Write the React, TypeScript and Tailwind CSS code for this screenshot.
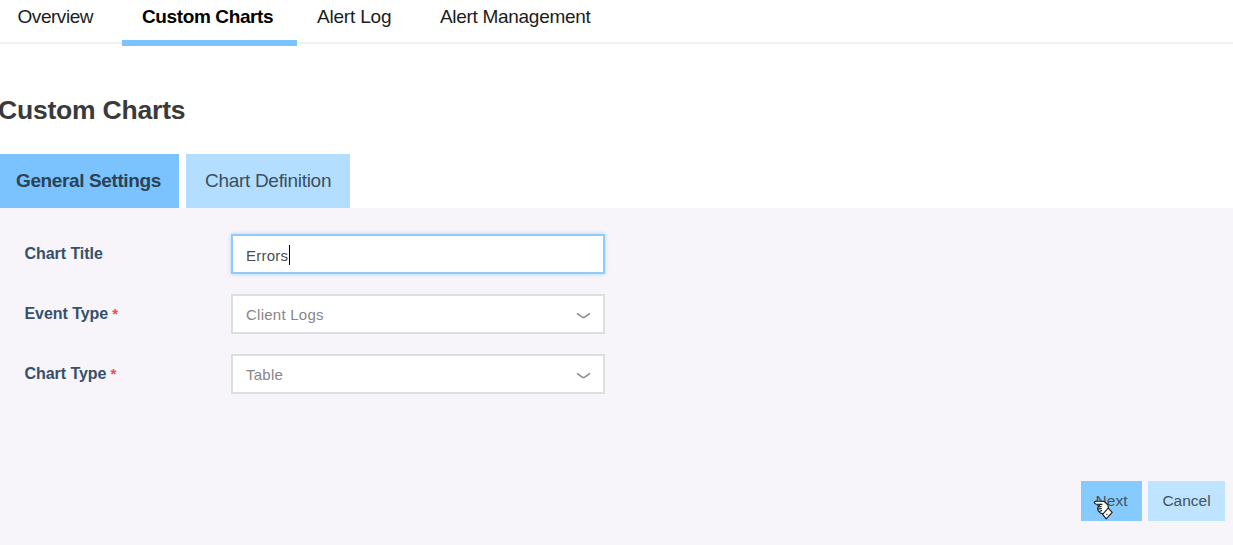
import type { ReactNode } from "react";

function Chevron() {
  return (
    <svg width="15" height="8" viewBox="0 0 15 8" fill="none" stroke="#8c8c8e" strokeWidth="1.6" className="mt-[3px]">
      <path d="M1 1.3 L6.3 5.1 Q7.5 5.9 8.7 5.1 L14 1.3" />
    </svg>
  );
}

function HandCursor() {
  return (
    <svg width="22" height="22" viewBox="0 0 22 22" className="absolute left-3 top-[19px]" stroke="#222" strokeWidth="1.2" strokeLinejoin="round">
      <path d="M1.3 2.2 Q2.3 1 4.5 1.2 L11 1.3 L15 5 L15.5 9.5 L11 14 L7.5 13.2 L5.2 10.8 L4.6 8.2 L5.6 6 L7 4.3 L2.8 4 Q1.3 3.6 1.3 2.2Z" fill="#fff" />
      <path d="M7 4.3 L9.5 4.3 M5.3 6.8 L8.5 6.3 M5 9.2 L8.7 8.4 M6.2 11.5 L9.2 10.4" fill="none" />
      <path d="M15.2 8.2 L19.2 12.4 L13.2 18.8 L9.6 14.4Z" fill="#fff" />
      <path d="M13.4 14.9 L14.2 14.1" fill="none" />
    </svg>
  );
}

function Row({ label, required, children }: { label: string; required?: boolean; children: ReactNode }) {
  return (
    <div className="flex h-10 items-center">
      <div className="w-[206.5px] text-base leading-5 font-bold tracking-[-0.05px] whitespace-nowrap text-[#36506a]">
        {label}
        {required && <span className="text-[15px] text-[#f04a4a]"> *</span>}
      </div>
      {children}
    </div>
  );
}

function Select({ value }: { value: string }) {
  return (
    <div className="flex h-10 w-[374px] items-center justify-between border-2 border-[#dcdfe1] bg-white pr-3 pl-[13px] text-[15px] tracking-[0.25px] text-[#868688]">
      <span className="pt-0.5">{value}</span>
      <Chevron />
    </div>
  );
}

export default function App() {
  return (
    <div className="h-[545px] w-[1233px] overflow-hidden bg-white font-['Liberation_Sans',Arial,sans-serif]">
      <nav className="flex h-[46px] text-[19px] leading-[34px] whitespace-nowrap text-[#1c1c1c]">
        <div className="h-[44px] w-[122px] border-b-2 border-[#f1f1f1] pl-[17.5px] tracking-[-0.45px]">Overview</div>
        <div className="h-[46px] w-[175px] border-b-[6px] border-[#7ac3ff] pl-5 font-bold tracking-[-0.38px] text-black">Custom Charts</div>
        <div className="h-[44px] w-[123px] border-b-2 border-[#f1f1f1] pl-5 tracking-[-0.2px]">Alert Log</div>
        <div className="h-[44px] flex-1 border-b-2 border-[#f1f1f1] pl-5 tracking-[-0.3px]">Alert Management</div>
      </nav>
      <h1 className="-ml-0.5 mt-12 h-[60px] text-[26.5px] leading-8 font-bold tracking-[-0.2px] whitespace-nowrap text-[#3a3a3c]">Custom Charts</h1>
      <div className="flex h-[54px] gap-[7px] text-[19px] leading-[54px] whitespace-nowrap text-[#3a4f61]">
        <div className="w-[179px] bg-[#7ac3ff] pl-4 font-bold tracking-[-0.38px] text-[#2c4256]">General Settings</div>
        <div className="w-[164px] bg-[#b3deff] pl-[19px] tracking-[-0.3px]">Chart Definition</div>
      </div>
      <main className="flex h-[337px] flex-col justify-between bg-[#f7f5f9] pt-[26px] pr-2 pb-6 pl-[24.5px]">
        <div className="flex flex-col gap-5">
          <Row label="Chart Title">
            <div className="flex h-10 w-[374px] items-center border-2 border-[#94c9fb] bg-white pl-[13px] text-[15px] tracking-[0.25px] text-[#4c4c4e] shadow-[0_0_4px_#a9d5fc]">
              <span className="pt-1">Errors</span>
              <span className="mt-[2px] ml-px h-5 w-px bg-black" />
            </div>
          </Row>
          <Row label="Event Type" required>
            <Select value="Client Logs" />
          </Row>
          <Row label="Chart Type" required>
            <Select value="Table" />
          </Row>
        </div>
        <div className="flex justify-end gap-[6px] text-[15.5px] text-[#44525f]">
          <button className="relative h-10 w-[61px] bg-[#86cbff]">
            Next
            <HandCursor />
          </button>
          <button className="h-10 w-[77px] bg-[#bfe4ff]">Cancel</button>
        </div>
      </main>
    </div>
  );
}
